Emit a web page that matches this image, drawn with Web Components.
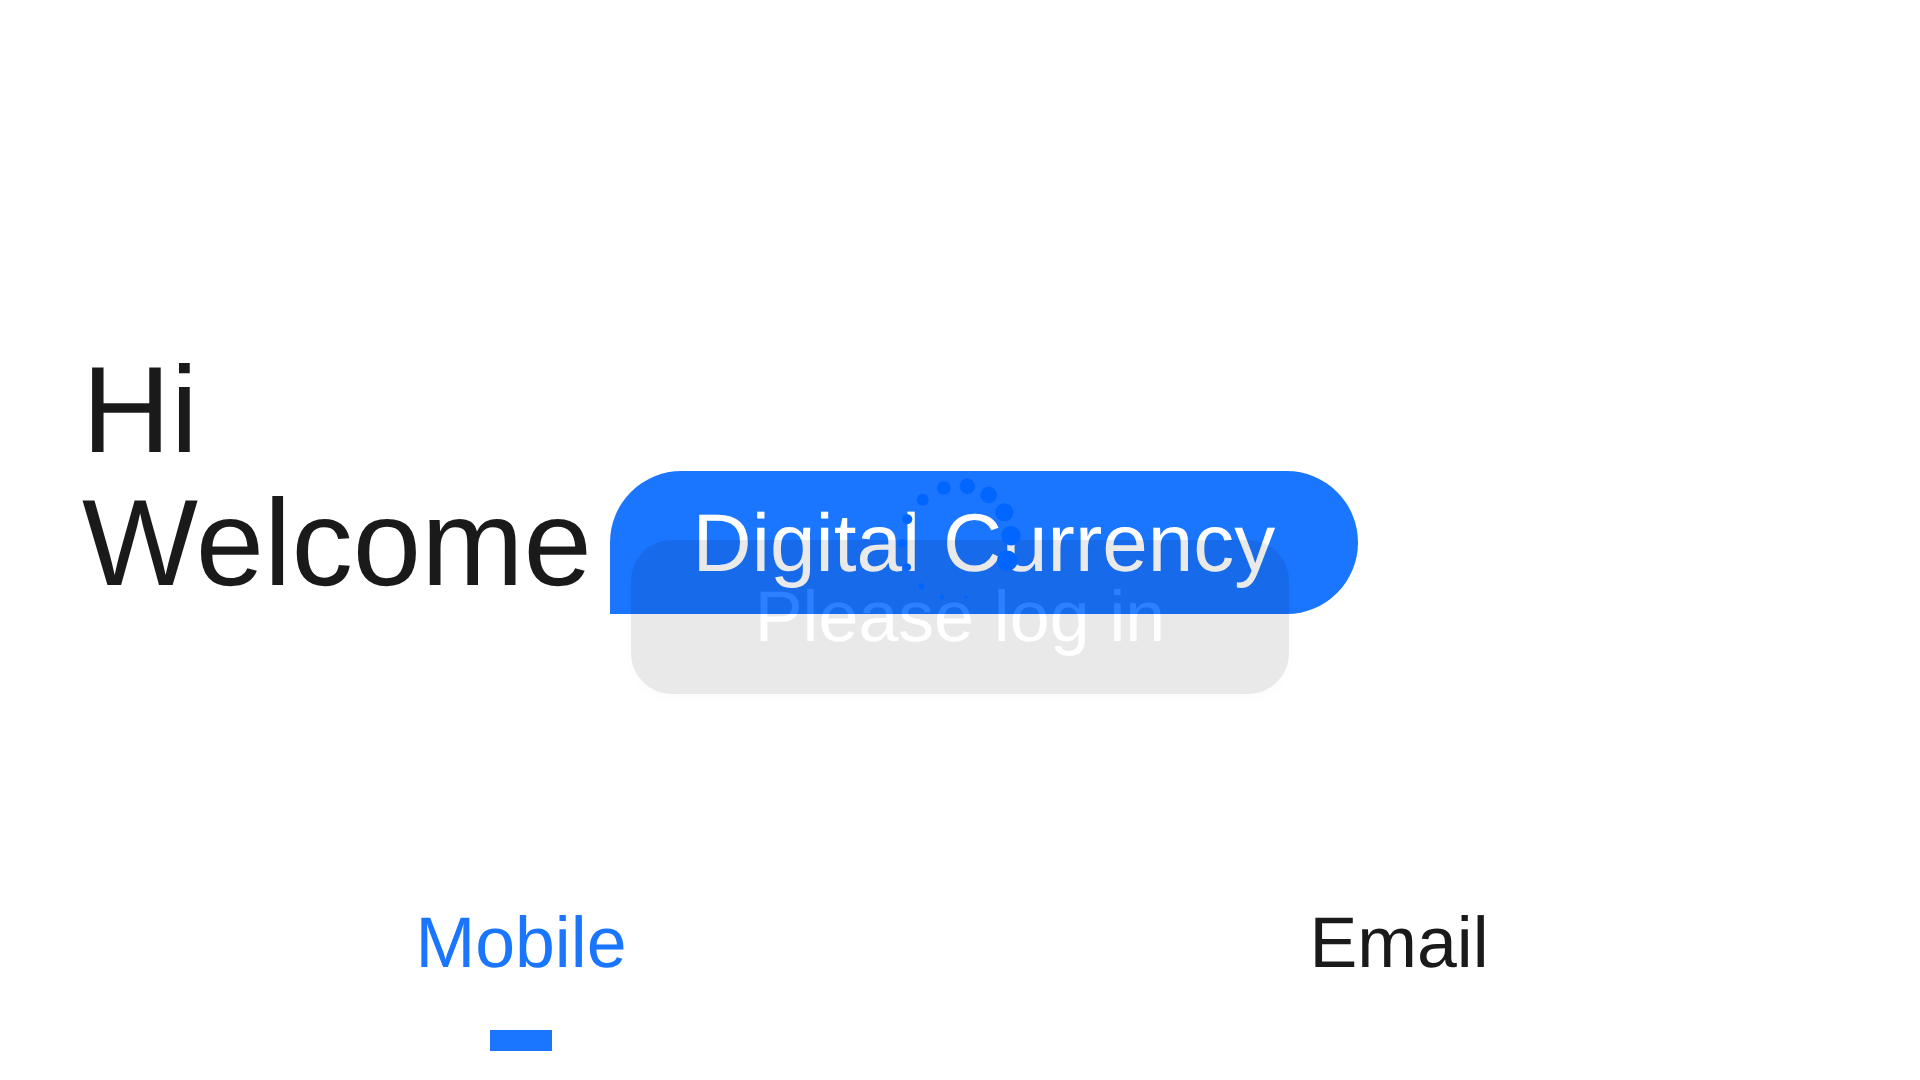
<!DOCTYPE html>
<html lang="en">
<head>
<meta charset="utf-8">
<title>Login</title>
<style>
  html, body { margin: 0; height: 100%; background: #fff; overflow: hidden; }
  body { font-family: "Liberation Sans", Arial, sans-serif; color: #1a1a1a; text-rendering: geometricPrecision; }
</style>
</head>
<body>
<login-page>
  <login-greeting slot="greeting">
    <span slot="first">Hi</span>
    <span slot="second">Welcome</span>
    <tag-pill slot="tag">Digital Currency</tag-pill>
  </login-greeting>
  <login-tabs slot="tabs">
    <tab-item active>Mobile</tab-item>
    <tab-item>Email</tab-item>
  </login-tabs>
</login-page>
<toast-box>Please log in</toast-box>
<dot-spinner></dot-spinner>

<script>
'use strict';

(function() {
  class LoginPage extends HTMLElement {
    constructor() {
      super()
      this.attachShadow({ mode: 'open' }).innerHTML = `
        <style>
        :host {
          display: flex;
          flex-direction: column;
          height: 1080px;
          box-sizing: border-box;
          padding: 351px 82px 0;
        }
        .tabs { margin-top: 288px; }
        </style>
        <slot name="greeting"></slot>
        <div class="tabs"><slot name="tabs"></slot></div>
      `
    }
  }

  class LoginGreeting extends HTMLElement {
    constructor() {
      super()
      this.attachShadow({ mode: 'open' }).innerHTML = `
        <style>
        :host {
          display: block;
          font-size: 122.88px;
          line-height: 122.88px;
          color: #1a1a1a;
        }
        .row {
          display: flex;
          align-items: center;
          gap: 18px;
        }
        .first { line-height: 119.88px; }
        ::slotted([slot="second"]) { padding-top: 3px; }
        </style>
        <div class="row first"><slot name="first"></slot></div>
        <div class="row"><slot name="second"></slot><slot name="tag"></slot></div>
      `
    }
  }

  class TagPill extends HTMLElement {
    constructor() {
      super()
      this.attachShadow({ mode: 'open' }).innerHTML = `
        <style>
        :host {
          display: block;
          box-sizing: border-box;
          width: 748px;
          height: 143.36px;
          line-height: 145.36px;
          text-align: center;
          font-size: 81.92px;
          color: #fff;
          background: #1a75ff;
          border-radius: 71.68px 71.68px 71.68px 0;
        }
        </style>
        <slot></slot>
      `
    }
  }

  class LoginTabs extends HTMLElement {
    constructor() {
      super()
      this.attachShadow({ mode: 'open' }).innerHTML = `
        <style>
        :host { display: flex; }
        </style>
        <slot></slot>
      `
    }
  }

  class TabItem extends HTMLElement {
    constructor() {
      super()
      this.attachShadow({ mode: 'open' }).innerHTML = `
        <style>
        :host {
          flex: 1;
          display: flex;
          flex-direction: column;
          align-items: center;
          font-size: 71.68px;
          line-height: 82.43px;
          color: #1a1a1a;
        }
        :host([active]) { color: #1a75ff; }
        .bar {
          width: 61.44px;
          height: 20.48px;
          margin-top: 45.6px;
        }
        :host([active]) .bar { background: #1a75ff; }
        </style>
        <slot></slot>
        <div class="bar"></div>
      `
    }
  }

  // 半透明的提示框，淡入时的状态
  class ToastBox extends HTMLElement {
    constructor() {
      super()
      this.attachShadow({ mode: 'open' }).innerHTML = `
        <style>
        :host {
          position: fixed;
          left: 50%;
          top: 540px;
          transform: translateX(-50%);
          box-sizing: border-box;
          width: 658px;
          height: 153.6px;
          padding-top: 36px;
          line-height: 82.43px;
          text-align: center;
          font-size: 71.68px;
          color: #fff;
          background: #000;
          border-radius: 40.96px;
          opacity: .085;
          box-shadow: 0 4px 12px rgba(0, 0, 0, .2);
        }
        </style>
        <slot></slot>
      `
    }
  }

  // x, y, r
  const DOTS = [
    [907.3, 519.3, 5], [922.7, 499.7, 6], [943.7, 488, 6.8], [967.3, 486.3, 7.7],
    [988.7, 495, 8.3], [1004.3, 512.3, 9], [1011, 535.7, 9.7], [1007.3, 560.7, 10.3],
    [902.7, 543.3, 4.3], [907.3, 567.3, 3.7], [921.3, 586.3, 3], [942, 597, 2.3],
    [965.7, 597, 1.7], [987, 586.7, .7]
  ]

  class DotSpinner extends HTMLElement {
    constructor() {
      super()
      const circles = DOTS.map(d => `<circle cx="${d[0] - 880}" cy="${d[1] - 470}" r="${d[2]}"/>`).join('')
      this.attachShadow({ mode: 'open' }).innerHTML = `
        <style>
        :host {
          position: fixed;
          left: 880px;
          top: 470px;
          width: 150px;
          height: 140px;
        }
        svg { display: block; fill: #0066ff; }
        </style>
        <svg width="150" height="140" viewBox="0 0 150 140">${circles}</svg>
      `
    }
  }

  customElements.define('login-page', LoginPage)
  customElements.define('login-greeting', LoginGreeting)
  customElements.define('tag-pill', TagPill)
  customElements.define('login-tabs', LoginTabs)
  customElements.define('tab-item', TabItem)
  customElements.define('toast-box', ToastBox)
  customElements.define('dot-spinner', DotSpinner)
})();
</script>
</body>
</html>
